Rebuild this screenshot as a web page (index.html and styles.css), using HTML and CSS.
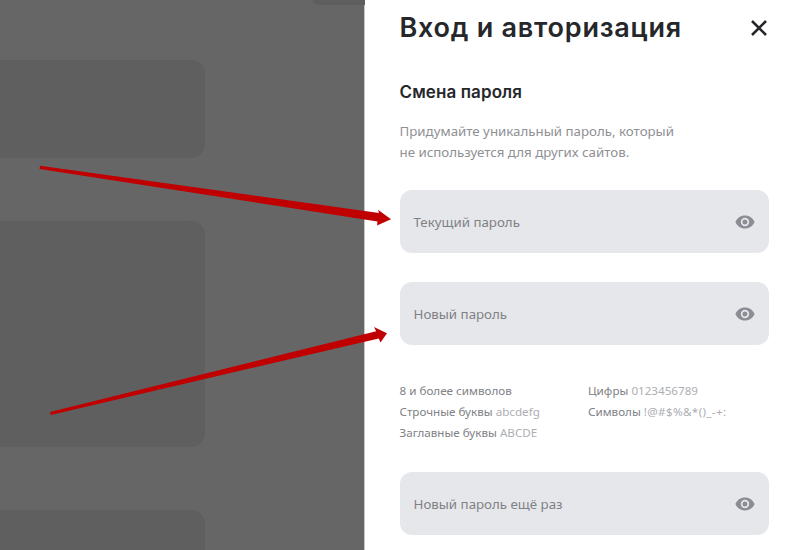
FILE: index.html
```html
<!DOCTYPE html>
<html lang="ru">
<head>
<meta charset="utf-8">
<title>Вход и авторизация</title>
<link rel="stylesheet" href="styles.css">
</head>
<body>
<div class="screen">
  <div class="backdrop">
    <div class="stub"></div>
    <div class="card card-a"></div>
    <div class="card card-b"></div>
    <div class="card card-c"></div>
  </div>
  <aside class="panel">
    <header class="panel-head">
      <h1>Вход и авторизация</h1>
      <svg class="close" viewBox="0 0 18 18" width="18" height="18"><path d="M2 2 16 16M16 2 2 16"/></svg>
    </header>
    <h2>Смена пароля</h2>
    <p class="lead">Придумайте уникальный пароль, который<br>не используется для других сайтов.</p>
    <div class="field field-first"><span>Текущий пароль</span><svg class="eye" viewBox="0 0 20 14" width="20" height="14"><path fill-rule="evenodd" d="M10 .5C5.6.5 1.9 3.2.4 7c1.500 3.800 5.200 6.500 9.600 6.500s8.100-2.700 9.600-6.500C18.100 3.200 14.400.5 10 .5ZM10 11.200A4.200 4.200 0 1 1 10 2.800a4.200 4.200 0 0 1 0 8.400ZM10 4.500a2.500 2.500 0 1 0 0 5 2.500 2.500 0 0 0 0-5Z"/></svg></div>
    <div class="field field-second"><span>Новый пароль</span><svg class="eye" viewBox="0 0 20 14" width="20" height="14"><path fill-rule="evenodd" d="M10 .5C5.6.5 1.9 3.2.4 7c1.500 3.800 5.200 6.500 9.600 6.500s8.100-2.700 9.600-6.500C18.100 3.200 14.400.5 10 .5ZM10 11.200A4.200 4.200 0 1 1 10 2.800a4.200 4.200 0 0 1 0 8.400ZM10 4.500a2.500 2.500 0 1 0 0 5 2.500 2.500 0 0 0 0-5Z"/></svg></div>
    <div class="rules">
      <div class="rule">8 и более символов</div>
      <div class="rule">Цифры <em>0123456789</em></div>
      <div class="rule">Строчные буквы <em>abcdefg</em></div>
      <div class="rule">Символы <em class="symbols">!@#$%&amp;*()_-+:</em></div>
      <div class="rule">Заглавные буквы <em>ABCDE</em></div>
    </div>
    <div class="field"><span>Новый пароль ещё раз</span><svg class="eye" viewBox="0 0 20 14" width="20" height="14"><path fill-rule="evenodd" d="M10 .5C5.6.5 1.9 3.2.4 7c1.500 3.800 5.200 6.500 9.600 6.500s8.100-2.700 9.600-6.500C18.100 3.200 14.400.5 10 .5ZM10 11.200A4.200 4.200 0 1 1 10 2.800a4.200 4.200 0 0 1 0 8.400ZM10 4.500a2.500 2.500 0 1 0 0 5 2.500 2.500 0 0 0 0-5Z"/></svg></div>
  </aside>
  <svg class="arrows" viewBox="0 0 800 550" width="800" height="550">
    <path d="M40 165.800 379 213 378 209.800 391 219.200 377 225.500 377.500 221.500 39.600 168.900Z"/>
    <path d="M50 412 376.200 331.300 374 326.900 387 333.300 380.500 342.500 378.800 338.400 50.800 414.900Z"/>
  </svg>
</div>
</body>
</html>
```
FILE: styles.css
```css
* { box-sizing: border-box; }
html, body { margin: 0; padding: 0; }
body { font-family: "Noto Sans", "Open Sans", sans-serif; }
.screen { position: relative; display: flex; width: 800px; height: 550px; overflow: hidden; background: #666; }
.backdrop { width: 365px; flex: none; border-right: 1px solid #c6c6c6; }
.stub { width: 52px; height: 5px; margin-left: 313px; background: #5e5e5e; border-radius: 0 0 0 8px; }
.card { width: 205px; background: #5f5f5f; border-radius: 0 14px 14px 0; }
.card-a { height: 98px; margin-top: 55px; }
.card-b { height: 226px; margin-top: 63px; }
.card-c { height: 60px; margin-top: 63px; }
.panel { flex: 1; background: #fff; padding: 0 31px 0 34.5px; height: 550px; overflow: hidden; }
.panel-head { display: flex; align-items: center; justify-content: space-between; height: 56px; padding-right: 1px; }
h1 { margin: 0; font: 600 27px/34px Inter, sans-serif; letter-spacing: .75px; color: #26272b; }
.close { fill: none; stroke: #26272b; stroke-width: 2.6; }
h2 { margin: 25px 0 0; font: 600 17px/22px Inter, sans-serif; letter-spacing: .1px; color: #26272b; }
.lead { margin: 18px 0 0; font-size: 13.3px; line-height: 21px; color: #8f9095; }
.field { display: flex; align-items: center; justify-content: space-between; height: 63px; padding: 0 14px; background: #e6e7eb; border-radius: 12px; font-size: 13.3px; color: #808185; }
.field-first { margin-top: 27px; }
.field-second { margin-top: 29px; }
.eye { fill: #8b8c94; }
.rules { display: grid; grid-template-columns: 188.5px 1fr; grid-auto-rows: 21px; margin: 35px 0 29px; font-size: 11.65px; line-height: 21px; color: #808185; }
.rule em { font-style: normal; color: #adaeb3; }
.rule .symbols { letter-spacing: .35px; }
.arrows { position: absolute; left: 0; top: 0; fill: #c00000; pointer-events: none; }
```
